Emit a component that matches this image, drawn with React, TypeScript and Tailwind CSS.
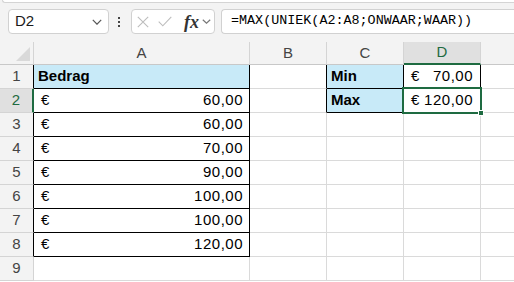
import React from "react";

const F = { fontFamily: '"Liberation Sans", Arial, sans-serif' };
const G = "border-[#dadada]";

function Chevron({ w = 10, h = 6, color = "#555" }: { w?: number; h?: number; color?: string }) {
  return (
    <svg width={w} height={h} viewBox={`0 0 ${w} ${h}`}>
      <path d={`M0.8 0.8 L${w / 2} ${h - 0.8} L${w - 0.8} 0.8`} stroke={color} strokeWidth="1.2" fill="none" />
    </svg>
  );
}

function Acc({ v, pr = "pr-[6px]" }: { v: string; pr?: string }) {
  return (
    <div className={`flex h-full items-center justify-between pl-[7px] ${pr} text-[15px] text-black`}>
      <span>€</span>
      <span className="tracking-[0.5px]">{v}</span>
    </div>
  );
}

export default function App() {
  const values = ["60,00", "60,00", "70,00", "90,00", "100,00", "100,00", "120,00"];
  const rowH = "h-[24px]";
  return (
    <div className="w-[514px] h-[282px] overflow-hidden bg-white" style={F}>
      {/* toolbar */}
      <div className="h-[42px] bg-[#f3f3f3]">
        <div className="ml-[2px] h-[3px] bg-white border-b border-l border-[#d4d4d4] rounded-bl-[5px]" />
        <div className="mt-[6px] flex h-[25px] items-center">
          <div className="ml-[8px] flex h-[25px] w-[101px] items-center justify-between rounded-[4px] border border-[#d1d1d1] bg-white pl-[6px] pr-[6px]">
            <span className="text-[15px] text-[#1a1a1a]">D2</span>
            <Chevron />
          </div>
          <div className="ml-[9px] flex w-[3px] flex-col gap-[2px]">
            <div className="h-[2px] w-[2px] bg-[#444]" />
            <div className="h-[2px] w-[2px] bg-[#444]" />
            <div className="h-[2px] w-[2px] bg-[#444]" />
          </div>
          <div className="ml-[10px] flex h-[25px] w-[84px] items-center rounded-[4px] border border-[#d1d1d1] bg-white pl-[5px]">
            <svg width="12" height="12" viewBox="0 0 12 12">
              <path d="M0.8 0.8L11.2 11.2M11.2 0.8L0.8 11.2" stroke="#bdbdbd" strokeWidth="1.1" fill="none" />
            </svg>
            <svg className="ml-[9px]" width="14" height="11" viewBox="0 0 14 11">
              <path d="M0.7 5.6L4.8 9.8L13.3 0.8" stroke="#bdbdbd" strokeWidth="1.1" fill="none" />
            </svg>
            <span
              className="ml-[12px] text-[18px] font-bold italic leading-none text-[#333]"
              style={{ fontFamily: '"Liberation Serif", "Times New Roman", serif' }}
            >
              fx
            </span>
            <span className="ml-[3px] flex items-center">
              <Chevron w={9} h={5} color="#777" />
            </span>
          </div>
          <div className="ml-[6px] flex h-[25px] flex-1 items-center rounded-l-[4px] border border-r-0 border-[#d1d1d1] bg-white pl-[9px]">
            <span
              className="text-[13.4px] text-black"
              style={{ fontFamily: '"Liberation Mono", "Courier New", monospace' }}
            >
              =MAX(UNIEK(A2:A8;ONWAAR;WAAR))
            </span>
          </div>
        </div>
      </div>

      {/* grid */}
      <div className="grid grid-cols-[34px_216px_77px_77px_77px_1fr] grid-rows-[23px_repeat(9,24px)]">
        {/* header row */}
        <div className="relative border-r border-b border-r-[#d4d4d4] border-b-[#c8c8c8] bg-[#f3f3f3]">
          <svg className="absolute right-[3px] bottom-[3px]" width="14" height="14" viewBox="0 0 14 14">
            <path d="M14 0L14 14L0 14Z" fill="#d9d9d9" />
          </svg>
        </div>
        {["A", "B", "C"].map((c) => (
          <div
            key={c}
            className="flex items-center justify-center border-r border-b border-r-[#d4d4d4] border-b-[#c8c8c8] bg-[#f3f3f3] text-[15px] text-[#444]"
          >
            {c}
          </div>
        ))}
        <div className="flex items-center justify-center border-r border-b-2 border-r-[#d4d4d4] border-b-[#1e6b41] bg-[#e0e0e0] text-[15px] text-[#1e6b41]">
          D
        </div>
        <div className="border-b border-b-[#c8c8c8] bg-[#f3f3f3]" />

        {Array.from({ length: 9 }).map((_, i) => {
          const r = i + 1;
          const inA = r <= 8;
          const sel = r === 2;
          const cells: React.ReactNode[] = [];
          cells.push(
            <div
              key={`h${r}`}
              className={`flex ${rowH} items-center justify-center border-b border-b-[#d4d4d4] text-[15px] ${
                sel
                  ? "border-r-2 border-r-[#1e6b41] bg-[#e0e0e0] text-[#1e6b41]"
                  : inA
                  ? "border-r border-r-black bg-[#f3f3f3] text-[#444]"
                  : "border-r border-r-[#d4d4d4] bg-[#f3f3f3] text-[#444]"
              }`}
            >
              {r}
            </div>
          );
          if (r === 1) {
            cells.push(
              <div key="a" className="flex items-center border-r border-b border-r-black border-b-black bg-[#c8eaf8] pl-[4px] text-[15px] font-bold text-black">
                Bedrag
              </div>
            );
          } else if (inA) {
            cells.push(
              <div key="a" className="border-r border-b border-r-black border-b-black">
                <Acc v={values[r - 2]} />
              </div>
            );
          } else {
            cells.push(<div key="a" className={`border-r border-b ${G}`} />);
          }
          cells.push(
            <div
              key="b"
              className={`border-r border-b border-b-[#dadada] ${r <= 2 ? "border-r-black" : "border-r-[#dadada]"}`}
            />
          );
          if (r <= 2) {
            cells.push(
              <div key="c" className="flex items-center border-r border-b border-r-black border-b-black bg-[#c8eaf8] pl-[4px] text-[15px] font-bold text-black">
                {r === 1 ? "Min" : "Max"}
              </div>
            );
          } else {
            cells.push(<div key="c" className={`border-r border-b ${G}`} />);
          }
          if (r === 1) {
            cells.push(
              <div key="d" className="border-r border-b border-r-black border-b-[#dadada]">
                <Acc v="70,00" pr="pr-[7px]" />
              </div>
            );
          } else if (r === 2) {
            cells.push(
              <div key="d" className="relative border-r border-b border-r-black border-b-[#dadada]">
                <Acc v="120,00" pr="pr-[7px]" />
                <div className="absolute -left-[2px] -top-[2px] -right-[2px] -bottom-[2px] border-2 border-[#1e6b41]" />
                <div className="absolute -right-[4px] -bottom-[4px] h-[6px] w-[6px] border border-white bg-[#1e6b41]" />
              </div>
            );
          } else {
            cells.push(<div key="d" className={`border-r border-b ${G}`} />);
          }
          cells.push(<div key="e" className={`border-b ${G}`} />);
          return <React.Fragment key={r}>{cells}</React.Fragment>;
        })}
      </div>
    </div>
  );
}
